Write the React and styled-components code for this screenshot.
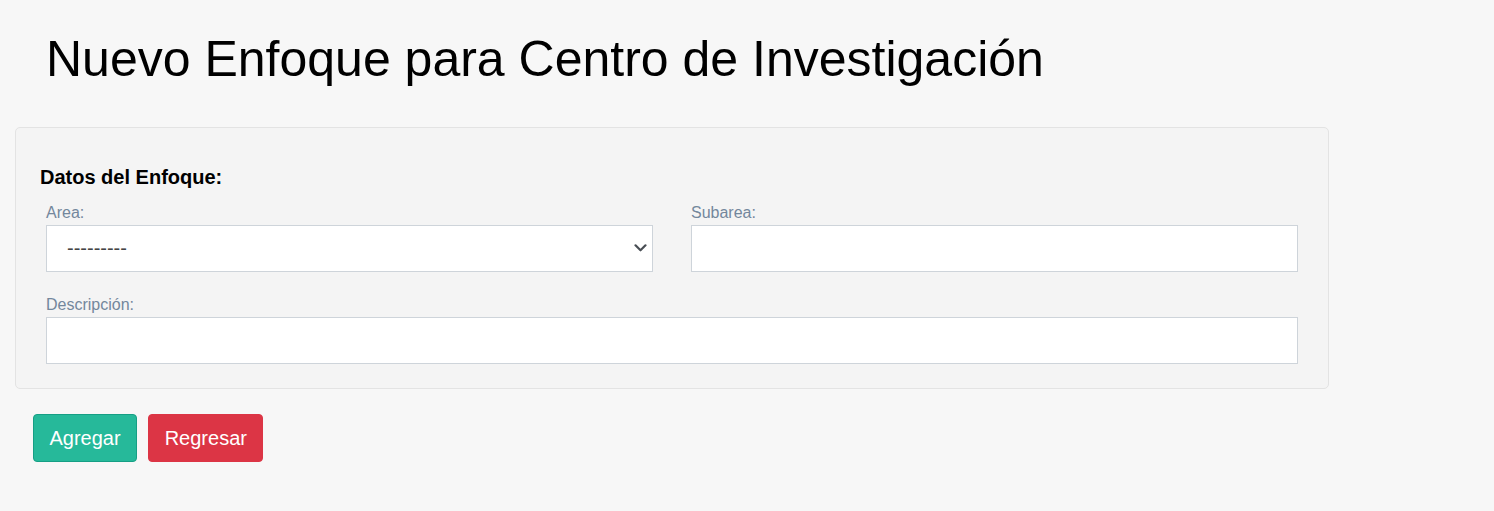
import React from "react";
import styled, { createGlobalStyle } from "styled-components";

const GlobalStyle = createGlobalStyle`
  html, body {
    margin: 0;
    padding: 0;
    background: #f7f7f7;
    font-family: "Liberation Sans", Arial, sans-serif;
  }
  * { box-sizing: border-box; }
`;

const Page = styled.div`
  min-height: 511px;
  padding: 31px 166px 40px 15px;
  background: #f7f7f7;
`;

const Title = styled.h1`
  margin: 0 0 38px 31px;
  font-size: 50px;
  font-weight: 400;
  line-height: 57.5px;
  color: #000;
`;

const Card = styled.section`
  width: 1314px;
  background: #f4f4f4;
  border: 1px solid #e3e3e3;
  border-radius: 5px;
  padding: 38px 23px 24px 23px;
`;

const SectionHeading = styled.h3`
  margin: 0 0 14px 1px;
  font-size: 20px;
  font-weight: 700;
  line-height: 23px;
  color: #000;
`;

const Grid = styled.div`
  display: grid;
  grid-template-columns: ${(p) => (p.$cols === 1 ? "1fr" : "1fr 1fr")};
  column-gap: 38px;
  padding: 0 7px;
  & + & {
    margin-top: 23px;
  }
`;

const Field = styled.div`
  display: flex;
  flex-direction: column;
`;

const Label = styled.label`
  font-size: 16px;
  line-height: 19px;
  color: #73879c;
  margin-bottom: 3px;
`;

const SelectWrap = styled.div`
  position: relative;
`;

const Select = styled.select`
  appearance: none;
  -webkit-appearance: none;
  width: 100%;
  height: 47px;
  border: 1px solid #ced4da;
  background: #fff;
  border-radius: 0;
  padding: 0 40px 0 20px;
  font-family: "Liberation Sans", Arial, sans-serif;
  font-size: 20px;
  color: #444;
  outline: none;
`;

const Chevron = styled.svg`
  position: absolute;
  right: 6px;
  top: 50%;
  transform: translateY(-50%);
  width: 13px;
  height: 9px;
  pointer-events: none;
`;

const Input = styled.input`
  width: 100%;
  height: 47px;
  border: 1px solid #ced4da;
  background: #fff;
  border-radius: 0;
  padding: 0 15px;
  font-family: "Liberation Sans", Arial, sans-serif;
  font-size: 20px;
  color: #444;
  outline: none;
`;

const Actions = styled.div`
  display: flex;
  gap: 11px;
  margin: 25px 0 0 18px;
`;

const Button = styled.button`
  height: 48px;
  padding: 0 15.5px;
  border-radius: 4px;
  border: 1px solid ${(p) => (p.$variant === "success" ? "#169f85" : "#dc3545")};
  background: ${(p) => (p.$variant === "success" ? "#26b99a" : "#dc3545")};
  color: #fff;
  font-family: "Liberation Sans", Arial, sans-serif;
  font-size: 20px;
  line-height: 1;
  cursor: pointer;
`;

export default function App() {
  return (
    <>
      <GlobalStyle />
      <Page>
        <Title>Nuevo Enfoque para Centro de Investigación</Title>
        <Card>
          <SectionHeading>Datos del Enfoque:</SectionHeading>
          <Grid>
            <Field>
              <Label htmlFor="area">Area:</Label>
              <SelectWrap>
                <Select id="area" defaultValue="">
                  <option value="">---------</option>
                </Select>
                <Chevron viewBox="0 0 13 9" fill="none">
                  <path d="M1.5 1.8 L6.5 6.8 L11.5 1.8" stroke="#4a4f55" strokeWidth="2.2" strokeLinecap="round" strokeLinejoin="round" />
                </Chevron>
              </SelectWrap>
            </Field>
            <Field>
              <Label htmlFor="subarea">Subarea:</Label>
              <Input id="subarea" type="text" />
            </Field>
          </Grid>
          <Grid $cols={1}>
            <Field>
              <Label htmlFor="desc">Descripción:</Label>
              <Input id="desc" type="text" />
            </Field>
          </Grid>
        </Card>
        <Actions>
          <Button $variant="success">Agregar</Button>
          <Button $variant="danger">Regresar</Button>
        </Actions>
      </Page>
    </>
  );
}
